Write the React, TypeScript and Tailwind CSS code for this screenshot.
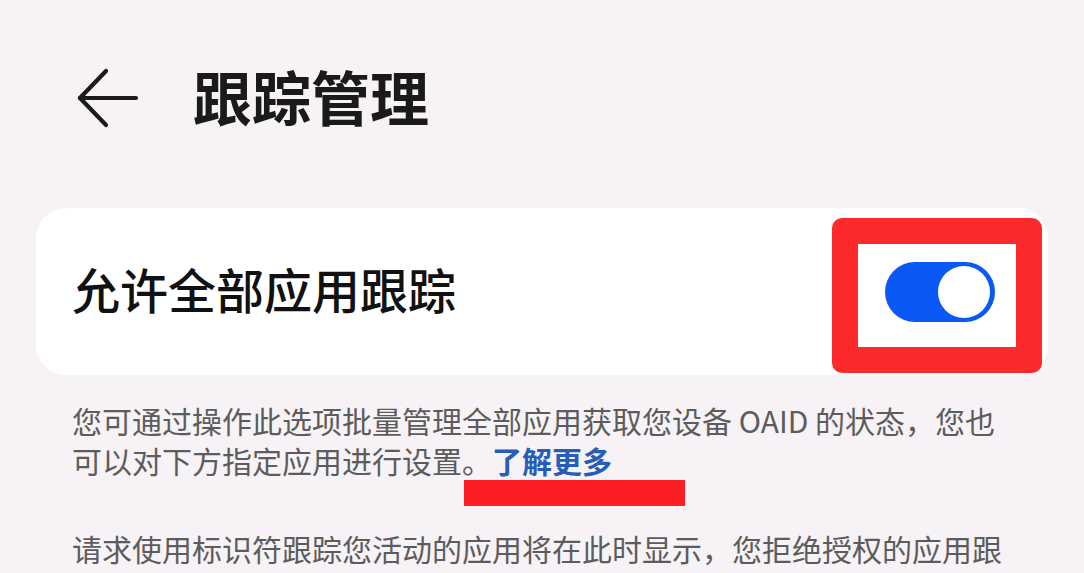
import { useState } from 'react';

const font = { fontFamily: '"Noto Sans CJK SC", "Noto Sans", sans-serif' };

function BackArrow() {
  return (
    <svg width="64" height="60" viewBox="0 0 64 60" fill="none" stroke="#1a1a1a" strokeWidth="4.2" strokeLinecap="round" strokeLinejoin="round">
      <path d="M4 30 H60" />
      <path d="M30 3 L4 30 L30 57" />
    </svg>
  );
}

function Toggle({ on, onChange }: { on: boolean; onChange: () => void }) {
  return (
    <button
      onClick={onChange}
      className={`relative block w-[110px] h-[60px] rounded-full transition-colors ${on ? 'bg-[#0a59f7]' : 'bg-gray-300'}`}
    >
      <span
        className={`absolute top-[4px] w-[52px] h-[52px] rounded-full bg-white transition-all ${on ? 'right-[5px]' : 'left-[5px]'}`}
      />
    </button>
  );
}

export default function App() {
  const [allowAll, setAllowAll] = useState(true);

  return (
    <div className="w-[1084px] h-[573px] overflow-hidden bg-[#f6f2f5]" style={font}>
      <div className="h-[196px] flex items-center pl-[76px]">
        <BackArrow />
        <h1 className="ml-[53px] pb-[6px] text-[59px] font-bold text-[#1a1a1a] leading-none">跟踪管理</h1>
      </div>

      <div className="mt-[12px] mx-[36px] h-[167px] rounded-[30px] bg-white flex items-center justify-between pl-[36px] pr-[53px]">
        <span className="pb-[8px] text-[48px] font-medium text-[#111] leading-none">允许全部应用跟踪</span>
        <div className="relative">
          <Toggle on={allowAll} onChange={() => setAllowAll((v) => !v)} />
          <div className="absolute left-[-53px] top-[-44px] w-[210px] h-[155px] border-[26px] border-[#fd2a2c] rounded-[10px] pointer-events-none" />
        </div>
      </div>

      <div className="pt-[25px] px-[72px] text-[30px] leading-[40px] text-[#5c5c5c] whitespace-nowrap">
        <p>您可通过操作此选项批量管理全部应用获取您设备 OAID 的状态，您也</p>
        <p>
          可以对下方指定应用进行设置。<span className="font-bold text-[#255db8]">了解更多</span>
        </p>
      </div>
      <div className="ml-[464px] w-[221px] h-[26px] bg-[#fb1e24]" />

      <div className="mt-[22px] px-[72px] text-[30px] leading-[40px] text-[#5c5c5c] whitespace-nowrap">
        <p>请求使用标识符跟踪您活动的应用将在此时显示，您拒绝授权的应用跟</p>
        <p>踪请求将在此处显示。</p>
      </div>
    </div>
  );
}
